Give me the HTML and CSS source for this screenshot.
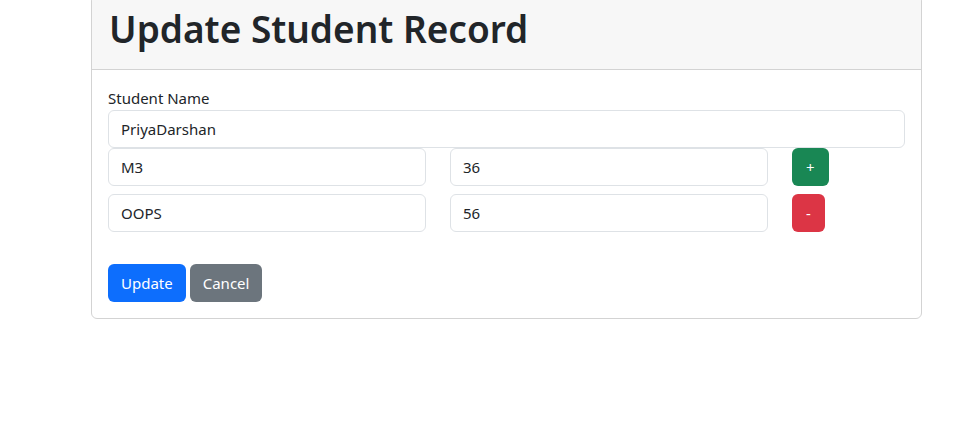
FILE: index.html
```html
<!DOCTYPE html>
<html lang="en">
<head>
<meta charset="utf-8">
<title>Update Student Record</title>
<link rel="stylesheet" href="styles.css">
</head>
<body>
<div class="page">
  <div class="card">
    <div class="card-header">
      <h1 class="title">Update Student Record</h1>
    </div>
    <div class="card-body">
      <label class="label" for="name">Student Name</label>
      <input class="field" id="name" type="text" value="PriyaDarshan">
      <div class="row">
        <div class="col"><input class="field" type="text" value="M3"></div>
        <div class="col"><input class="field" type="text" value="36"></div>
        <div class="col-btn"><button class="btn btn-green btn-sq" type="button">+</button></div>
      </div>
      <div class="row">
        <div class="col"><input class="field" type="text" value="OOPS"></div>
        <div class="col"><input class="field" type="text" value="56"></div>
        <div class="col-btn"><button class="btn btn-red btn-sq" type="button">-</button></div>
      </div>
      <div class="actions">
        <button class="btn btn-blue" type="button">Update</button>
        <button class="btn btn-gray" type="button">Cancel</button>
      </div>
    </div>
  </div>
</div>
</body>
</html>
```
FILE: styles.css
```css
* { box-sizing: border-box; }
html, body { margin: 0; padding: 0; background: #fff; }
body {
  font-family: "Noto Sans", "Open Sans", sans-serif;
  font-size: 15px;
  color: #212529;
}
.page {
  margin-top: -5px;
  padding-left: 91px;
}
.card {
  width: 831px;
  border: 1px solid #d3d3d3;
  border-radius: 6px;
  background: #fff;
}
.card-header {
  background: #f7f7f7;
  border-bottom: 1px solid #d3d3d3;
  padding: 8px 17px;
  border-radius: 5px 5px 0 0;
}
.title {
  margin: 0 0 8px 0;
  font-size: 37px;
  font-weight: 600;
  line-height: 49px;
  color: #212529;
}
.card-body {
  padding: 16px;
}
.label {
  display: block;
  line-height: 24px;
  font-size: 15px;
}
.field {
  display: block;
  width: 100%;
  height: 38px;
  padding: 6px 12px;
  border: 1px solid #dee2e6;
  border-radius: 6px;
  font-family: inherit;
  font-size: 15px;
  color: #212529;
  background: #fff;
}
.row {
  display: grid;
  grid-template-columns: 318px 318px 1fr;
  column-gap: 24px;
  margin-bottom: 8px;
}
.row + .row { margin-bottom: 32px; }
.btn {
  display: inline-block;
  height: 38px;
  padding: 6px 12px;
  border: 1px solid transparent;
  border-radius: 6px;
  font-family: inherit;
  font-size: 15px;
  line-height: 24px;
  color: #fff;
  cursor: pointer;
}
.btn-sq { padding: 6px 13px; }
.btn-green { background: #198754; }
.btn-red { background: #dc3545; }
.btn-blue { background: #0d6efd; }
.btn-gray { background: #6c757d; }
.actions {
  display: flex;
  gap: 4px;
}
```
